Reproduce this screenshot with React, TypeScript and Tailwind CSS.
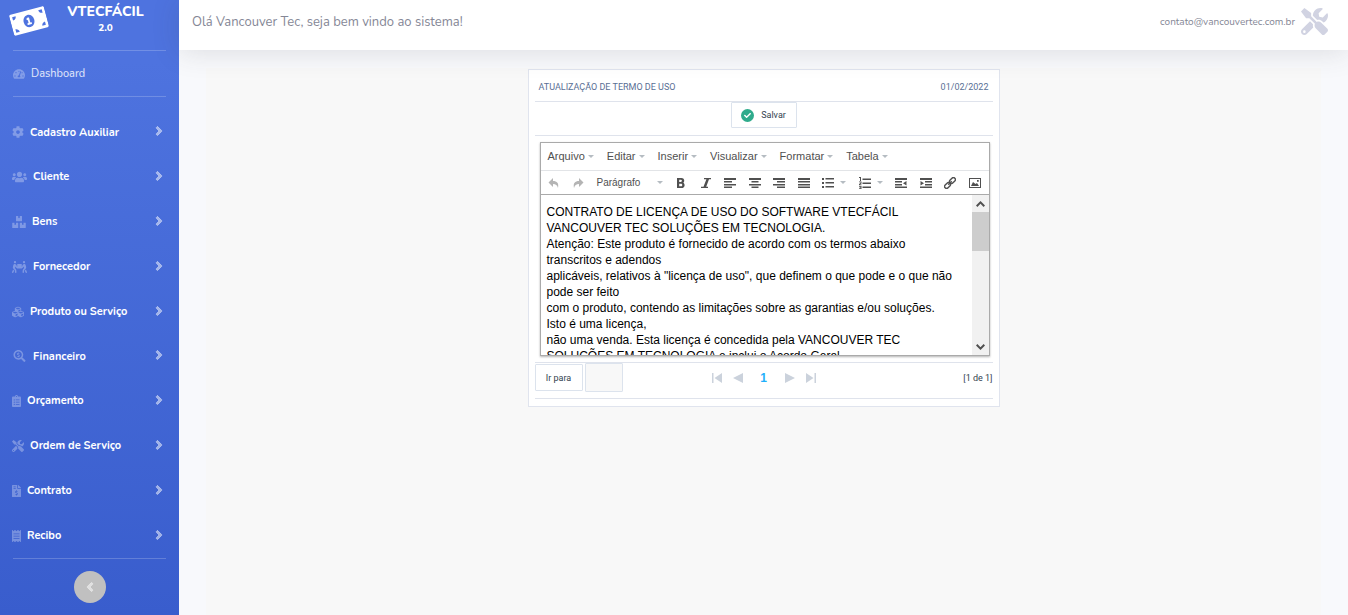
import type { ReactNode } from 'react';
import type { IconType } from 'react-icons';
import {
  FaAngleLeft,
  FaAngleRight,
  FaBoxes,
  FaCheck,
  FaClipboardList,
  FaCog,
  FaCubes,
  FaFileInvoiceDollar,
  FaMoneyBillAlt,
  FaPeopleCarry,
  FaReceipt,
  FaSearchDollar,
  FaTachometerAlt,
  FaTools,
  FaUsers,
} from 'react-icons/fa';

const navItems: { label: string; icon: IconType; box: string }[] = [
  { label: 'Cadastro Auxiliar', icon: FaCog, box: 'w-3' },
  { label: 'Cliente', icon: FaUsers, box: 'w-[15px]' },
  { label: 'Bens', icon: FaBoxes, box: 'w-[14px]' },
  { label: 'Fornecedor', icon: FaPeopleCarry, box: 'w-[15px]' },
  { label: 'Produto ou Serviço', icon: FaCubes, box: 'w-3' },
  { label: 'Financeiro', icon: FaSearchDollar, box: 'w-[15px]' },
  { label: 'Orçamento', icon: FaClipboardList, box: 'w-[9px]' },
  { label: 'Ordem de Serviço', icon: FaTools, box: 'w-3' },
  { label: 'Contrato', icon: FaFileInvoiceDollar, box: 'w-[9px]' },
  { label: 'Recibo', icon: FaReceipt, box: 'w-[9px]' },
];

const contractLines = [
  'CONTRATO DE LICENÇA DE USO DO SOFTWARE VTECFÁCIL',
  'VANCOUVER TEC SOLUÇÕES EM TECNOLOGIA.',
  'Atenção: Este produto é fornecido de acordo com os termos abaixo',
  'transcritos e adendos',
  'aplicáveis, relativos à "licença de uso", que definem o que pode e o que não',
  'pode ser feito',
  'com o produto, contendo as limitações sobre as garantias e/ou soluções.',
  'Isto é uma licença,',
  'não uma venda. Esta licença é concedida pela VANCOUVER TEC',
  'SOLUÇÕES EM TECNOLOGIA e inclui o Acordo Geral',
];

const menus = ['Arquivo', 'Editar', 'Inserir', 'Visualizar', 'Formatar', 'Tabela'];

function Caret() {
  return (
    <svg viewBox="0 0 6 3" className="h-[3px] w-[6px] shrink-0 fill-[#b5bcc2]" aria-hidden="true">
      <path d="M0 0h6L3 3z" />
    </svg>
  );
}

function Tool({ label, children, muted = false }: { label: string; children: ReactNode; muted?: boolean }) {
  return (
    <button type="button" aria-label={label} className={muted ? 'text-[#b4b4b4]' : 'text-[#505050]'}>
      <svg viewBox="0 0 12 12" className="size-3 fill-current" aria-hidden="true">
        {children}
      </svg>
    </button>
  );
}

function Sidebar() {
  return (
    <aside className="flex min-h-screen w-[179px] shrink-0 flex-col bg-linear-to-b from-[#4e73df] from-10% to-[#395dcd] px-[13px] text-white">
      <a href="#inicio" className="flex h-[50px] items-start">
        <FaMoneyBillAlt className="mt-[3px] -ml-0.5 size-9 shrink-0 -rotate-15" />
        <span className="flex-1 pt-1 pr-0.5 text-center text-sm leading-4 font-extrabold">
          VTECFÁCIL
          <span className="block text-[10px] leading-4">2.0</span>
        </span>
      </a>
      <a href="#dashboard" className="flex h-[47px] items-center gap-1.5 border-y border-white/20 text-[11px] text-white/85">
        <FaTachometerAlt className="size-3 text-white/30" />
        <span className="pt-0.5">Dashboard</span>
      </a>
      <ul className="-ml-px flex flex-1 flex-col pt-[13px]">
        {navItems.map(({ label, icon: Icon, box }) => (
          <li key={label} className="flex flex-1">
            <a href="#menu" className="flex flex-1 items-center gap-1.5 text-[11px] font-bold">
              <Icon className={`${box} h-3 text-white/30`} />
              <span className="flex-1 pt-px">{label}</span>
              <FaAngleRight className="mb-0.5 size-[14px] stroke-current stroke-[28px] text-white/50" />
            </a>
          </li>
        ))}
      </ul>
      <div className="flex justify-center border-t border-white/20 py-3">
        <button type="button" aria-label="Recolher menu" className="flex size-8 items-center justify-center rounded-full bg-[#c0c0c0] text-white/50">
          <FaAngleLeft className="size-[14px] stroke-current stroke-[28px]" />
        </button>
      </div>
    </aside>
  );
}

function Toolbar() {
  return (
    <div className="flex h-6 items-center justify-between border-t border-[#e2e4e7] pr-2 pl-[7px]">
      <Tool label="Desfazer" muted>
        <path d="M5 1v3c4 0 6 2 5 7-1-3-2-4-5-4v3L0.500 5.500z" />
      </Tool>
      <Tool label="Refazer" muted>
        <path d="M7 1v3c-4 0-6 2-5 7 1-3 2-4 5-4v3l4.500-4.500z" />
      </Tool>
      <button type="button" className="flex w-[66px] items-center justify-between text-[10px] text-[#505050]">
        Parágrafo <Caret />
      </button>
      <Tool label="Negrito">
        <path fillRule="evenodd" d="M2 1h4.500C9.500 1 10 4.500 8.300 5.700 10.500 7 10 11 6.500 11H2zM4.200 2.700v2.200h1.600c1.500 0 1.500-2.200 0-2.200zM4.200 6.700v2.600h1.900c1.600 0 1.600-2.600 0-2.600z" />
      </Tool>
      <Tool label="Itálico">
        <path d="M4 1h7v1.300H9L6.200 9.700H8V11H1V9.700h2.500L6.400 2.300H4z" />
      </Tool>
      <Tool label="Alinhar à esquerda">
        <path d="M0 1h12v2H0zM0 4h8v1.600H0zM0 7h12v1.600H0zM0 9.500h8V11H0z" />
      </Tool>
      <Tool label="Centralizar">
        <path d="M0 1h12v2H0zM2.500 4h7v1.600h-7zM0 7h12v1.600H0zM2.500 9.500h7V11h-7z" />
      </Tool>
      <Tool label="Alinhar à direita">
        <path d="M0 1h12v2H0zM4 4h8v1.600H4zM0 7h12v1.600H0zM4 9.500h8V11H4z" />
      </Tool>
      <Tool label="Justificar">
        <path d="M0 1h12v2H0zM0 4h12v1.600H0zM0 7h12v1.600H0zM0 9.500h12V11H0z" />
      </Tool>
      <div className="flex items-center gap-1.5">
        <Tool label="Lista não ordenada">
          <path d="M0 1h2v2H0zM0 5h2v2H0zM0 9h2v2H0zM3.500 1H12v1.600H3.500zM3.500 5H12v1.600H3.500zM3.500 9H12v1.600H3.500z" />
        </Tool>
        <Caret />
      </div>
      <div className="flex items-center gap-1.5">
        <Tool label="Lista ordenada">
          <path d="M3.500 1.500H12V3H3.500zM3.500 5.500H12V7H3.500zM3.500 9.500H12V11H3.500zM0 0h2v4H1V1H0zM0 4.500h2.500v2L1 7.500h1.500v.8H0V7l1.500-1v-.7H0zM0 9h2.500v3H0v-.7h1.500v-.5H.5v-.6h1v-.5H0z" />
        </Tool>
        <Caret />
      </div>
      <Tool label="Diminuir recuo">
        <path d="M0 1h12v2H0zM0 4h7v1.600H0zM0 7h7v1.600H0zM0 9.500h12V11H0zM11.500 4v4.500L8 6.250z" />
      </Tool>
      <Tool label="Aumentar recuo">
        <path d="M0 1h12v2H0zM5 4h7v1.600H5zM5 7h7v1.600H5zM0 9.500h12V11H0zM.5 4v4.500L4 6.250z" />
      </Tool>
      <Tool label="Inserir link">
        <g transform="rotate(-45 6 6)" fill="none" stroke="currentColor" strokeWidth="1.400">
          <rect x="-.8" y="4" width="6.600" height="4" rx="2" />
          <rect x="6.200" y="4" width="6.600" height="4" rx="2" />
          <path d="M3.500 6h5" />
        </g>
      </Tool>
      <Tool label="Inserir imagem">
        <path fillRule="evenodd" d="M0 1h12v10H0zM1 2v8h10V2zM2 9l2-4 2.500 2L8 6l2 3zM8 3h1.700v1.700H8z" />
      </Tool>
    </div>
  );
}

function Editor() {
  return (
    <div className="mt-1.5 mr-[3px] ml-[5px] border border-[#aaa] font-['Liberation_Sans',Arial,sans-serif] shadow-[0_1px_2px_rgba(0,0,0,0.3)]">
      <div className="flex h-[27px] items-center gap-[13px] px-[7px]">
        {menus.map((menu) => (
          <button key={menu} type="button" className="flex items-center gap-[3px] text-[11px] text-[#505050]">
            {menu} <Caret />
          </button>
        ))}
      </div>
      <Toolbar />
      <div className="flex h-[161px] border-t border-[#aaa]">
        <div className="min-w-0 flex-1 overflow-hidden pt-[9px] pl-1.5 text-[12px] leading-4 whitespace-nowrap text-black">
          {contractLines.map((line) => (
            <p key={line}>{line}</p>
          ))}
        </div>
        <div className="flex w-[17px] shrink-0 flex-col bg-[#f1f1f1] text-[#505050]">
          <button type="button" aria-label="Rolar para cima" className="flex h-[17px] items-center justify-center">
            <svg viewBox="0 0 9 6" className="h-1.5 w-[9px] fill-none stroke-current stroke-2" aria-hidden="true">
              <path d="M.7 5.200 4.500 1.400l3.800 3.800" />
            </svg>
          </button>
          <div className="h-[39px] bg-[#cdcdcd]" />
          <button type="button" aria-label="Rolar para baixo" className="mt-auto flex h-4 items-center justify-center">
            <svg viewBox="0 0 9 6" className="h-1.5 w-[9px] fill-none stroke-current stroke-2" aria-hidden="true">
              <path d="m.7.8 3.800 3.800L8.300.8" />
            </svg>
          </button>
        </div>
      </div>
    </div>
  );
}

function PageButton({ label, path }: { label: string; path: string }) {
  return (
    <button type="button" aria-label={label}>
      <svg viewBox="0 0 10 10" className="size-2.5 fill-[#cbd2dc]" aria-hidden="true">
        <path d={path} />
      </svg>
    </button>
  );
}

function TermCard() {
  return (
    <section className="w-[472px] max-w-full border border-[#e0e4ee] bg-white px-1.5 pb-[7px] font-[Roboto,sans-serif] text-[9px]">
      <header className="flex h-8 items-center justify-between border-b border-[#dfe3ec] px-1 pt-1 text-[#5a6f95]">
        <h1>ATUALIZAÇÃO DE TERMO DE USO</h1>
        <time dateTime="2022-02-01">01/02/2022</time>
      </header>
      <div className="flex h-[34px] items-start justify-center border-b border-[#dfe3ec]">
        <button type="button" className="flex h-[26px] w-[66px] items-center justify-center gap-[7px] rounded-[1px] border border-[#dce3ed] text-[#333f4f]">
          <span className="flex size-[13px] items-center justify-center rounded-full bg-[#2fab8c] text-white">
            <FaCheck className="size-[7px]" />
          </span>
          <span className="pt-px">Salvar</span>
        </button>
      </div>
      <Editor />
      <footer className="mt-1.5 flex h-[37px] items-start justify-between border-y border-[#dfe3ec] text-[#333f4f]">
        <div className="flex items-center gap-0.5">
          <button type="button" className="h-[27px] w-12 rounded-[1px] border border-[#dce3ed] pt-0.5">Ir para</button>
          <input aria-label="Ir para a página" className="h-[29px] w-[38px] rounded-[1px] border border-[#dce3ed] bg-[#f8f8f8] px-1" />
        </div>
        <nav aria-label="Paginação" className="flex h-[29px] items-center gap-[11px]">
          <PageButton label="Primeira página" path="M0 0h1.500v10H0zM10 0v10L2.500 5z" />
          <PageButton label="Página anterior" path="M10 0v10L0 5z" />
          <span className="w-5 text-center font-['Liberation_Sans',Arial,sans-serif] text-xs font-bold text-[#1fb0fb]">1</span>
          <PageButton label="Próxima página" path="M0 0v10l10-5z" />
          <PageButton label="Última página" path="M8.500 0H10v10H8.500zM0 0v10l7.500-5z" />
        </nav>
        <span className="flex h-[29px] w-[88px] items-center justify-end pt-0.5">[1 de 1]</span>
      </footer>
    </section>
  );
}

export default function App() {
  return (
    <div className="flex min-h-screen bg-[#f8f9fc] font-[Nunito,'Open_Sans',sans-serif]">
      <Sidebar />
      <div className="flex min-w-0 flex-1 flex-col">
        <header className="relative flex h-[50px] items-center justify-between bg-white pr-5 pl-[13px] text-[#858796] shadow-[0_2px_28px_rgba(58,59,69,0.15)]">
          <p className="pb-1 text-[13px]">Olá Vancouver Tec, seja bem vindo ao sistema!</p>
          <a href="#conta" className="flex items-center gap-1.5 pb-2 text-[10px]">
            <span className="pt-0.5">contato@vancouvertec.com.br</span>
            <FaTools className="size-[27px] text-[#d1d3e2]" />
          </a>
        </header>
        <main className="flex flex-1 px-[27px] pt-[18px]">
          <div className="flex flex-1 items-start justify-center bg-[#f8f8f8] pt-px">
            <TermCard />
          </div>
        </main>
      </div>
    </div>
  );
}
